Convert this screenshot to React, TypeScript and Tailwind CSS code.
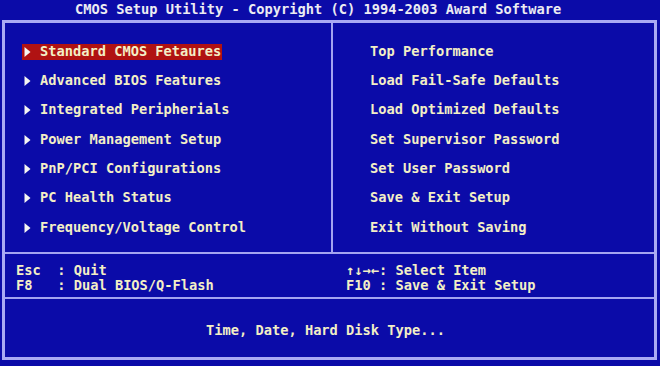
import { type FC } from 'react';

const leftItems = [
    'Standard CMOS Fetaures',
    'Advanced BIOS Features',
    'Integrated Peripherials',
    'Power Management Setup',
    'PnP/PCI Configurations',
    'PC Health Status',
    'Frequency/Voltage Control',
];

const rightItems = [
    'Top Performance',
    'Load Fail-Safe Defaults',
    'Load Optimized Defaults',
    'Set Supervisor Password',
    'Set User Password',
    'Save & Exit Setup',
    'Exit Without Saving',
];

const Arrow: FC = () => (
    <svg width="8" height="16" viewBox="0 0 8 16" className="shrink-0">
        <path d="M1.5 3 L7.5 8 L1.5 13 Z" fill="#f6f6f2" />
    </svg>
);

const MenuRow: FC<{ label: string; active?: boolean }> = ({ label, active }) => (
    <div className="h-[29.33px] flex items-center pl-[17px]">
        <div className={`flex items-center h-[16px] pl-[1px] pr-[1px] ${active ? 'bg-[#b01212]' : ''}`}>
            <Arrow />
            <span className="ml-[9px] whitespace-pre">{label}</span>
        </div>
    </div>
);

export default function App() {
    return (
        <div
            className="w-[660px] h-[366px] bg-[#0b0ba8] text-[#f3efc6] font-bold text-[13.7px] leading-none overflow-hidden"
            style={{ fontFamily: '"DejaVu Sans Mono", "Liberation Mono", monospace' }}
        >
            <div className="h-[20px] flex items-center pl-[75px] text-[#ececf2] whitespace-pre">
                CMOS Setup Utility - Copyright (C) 1994-2003 Award Software
            </div>

            <div className="ml-[2px] w-[655px] h-[340px] border-[3px] border-[#aaaaf4] flex flex-col">
                <div className="h-[231px] flex border-b-2 border-[#a4a4f0]">
                    <div className="w-[328px] border-r-2 border-[#a4a4f0] pt-[14px]">
                        {leftItems.map((item, i) => (
                            <MenuRow key={item} label={item} active={i === 0} />
                        ))}
                    </div>
                    <div className="flex-1 pt-[14px] pl-[37px]">
                        {rightItems.map((item) => (
                            <div key={item} className="h-[29.33px] flex items-center whitespace-pre">
                                {item}
                            </div>
                        ))}
                    </div>
                </div>

                <div className="h-[45px] flex border-b-2 border-[#a4a4f0] pt-[10px] pl-[11px]">
                    <div className="w-[330px] flex flex-col gap-[1px]">
                        <div className="h-[14px] whitespace-pre">Esc  : Quit</div>
                        <div className="h-[14px] whitespace-pre">F8   : Dual BIOS/Q-Flash</div>
                    </div>
                    <div className="flex flex-col gap-[1px]">
                        <div className="h-[14px] whitespace-pre">↑↓→←: Select Item</div>
                        <div className="h-[14px] whitespace-pre">F10 : Save &amp; Exit Setup</div>
                    </div>
                </div>

                <div className="flex-1 flex items-center pl-[201px] pt-[6px] whitespace-pre">
                    Time, Date, Hard Disk Type...
                </div>
            </div>
        </div>
    );
}
